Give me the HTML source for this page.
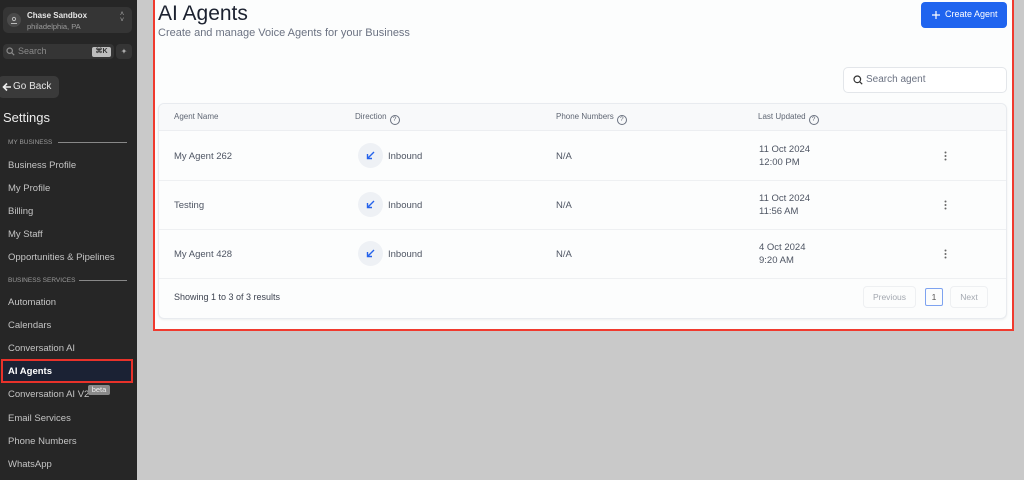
<!DOCTYPE html>
<html><head><meta charset="utf-8"><style>
*{box-sizing:border-box;margin:0;padding:0}
body{width:1024px;height:480px;overflow:hidden;background:#c9c9c9;font-family:"Liberation Sans",sans-serif;position:relative}
.sb{position:absolute;left:0;top:0;width:137px;height:480px;background:#262626;color:#c8c8c8}
.abs{position:absolute}
.it{position:absolute;left:8px;font-size:9.5px;color:#c4c4c4}
.sec{position:absolute;left:8px;font-size:6.5px;color:#9a9a9a}
.main{position:absolute;left:153px;top:-4px;width:861px;height:335px;border:2px solid #f03a2e;background:#fcfdfd}
.card{position:absolute;left:158px;top:103px;width:849px;height:216px;border:1px solid #e8ebef;border-radius:6px;background:#fcfdfd;box-shadow:0 1px 2px rgba(0,0,0,.06)}
.hd{position:absolute;font-size:8px;color:#5f6673}
.cell{position:absolute;font-size:9.5px;color:#4e5563}
.q{display:inline-block;width:10px;height:10px;border:1px solid #6b7280;border-radius:50%;font-size:6.5px;text-align:center;line-height:8px;vertical-align:-2px;margin-left:3px}
.ic{position:absolute;width:25px;height:25px;border-radius:50%;background:#eef1f5}
.ic svg{position:absolute;left:8px;top:8px}
.dots{position:absolute}
</style></head><body>
<div class="sb">
 <div class="abs" style="left:3px;top:7px;width:129px;height:26px;background:#353535;border-radius:5px"></div>
 <div class="abs" style="left:7px;top:13px;width:14px;height:14px;border-radius:50%;background:#4a4a4a"></div>
 <svg class="abs" style="left:10px;top:16px" width="8" height="8" viewBox="0 0 8 8" fill="none" stroke="#bbb" stroke-width="1"><circle cx="4" cy="3" r="1.6"/><path d="M1 7.5h6"/></svg>
 <div class="abs" style="left:27px;top:11px;font-size:8px;color:#e6e6e6;font-weight:bold">Chase Sandbox</div>
 <div class="abs" style="left:27px;top:22px;font-size:7.5px;color:#9c9c9c">philadelphia, PA</div>
 <div class="abs" style="left:120px;top:12px;font-size:7px;color:#aaa;line-height:6px">˄<br>˅</div>
 <div class="abs" style="left:3px;top:44px;width:111px;height:15px;background:#353535;border-radius:4px"></div>
 <svg class="abs" style="left:6px;top:47px" width="9" height="9" viewBox="0 0 9 9" fill="none" stroke="#8a8a8a" stroke-width="1.2"><circle cx="3.7" cy="3.7" r="2.7"/><path d="M5.7 5.7l2.5 2.5"/></svg>
 <div class="abs" style="left:18px;top:46px;font-size:9px;color:#8a8a8a">Search</div>
 <div class="abs" style="left:92px;top:47px;width:19px;height:10px;background:#bdbdbd;border-radius:2px;font-size:7px;color:#333;text-align:center;line-height:10px;font-weight:bold">⌘K</div>
 <div class="abs" style="left:116px;top:44px;width:16px;height:15px;background:#353535;border-radius:4px;font-size:8px;color:#aaa;text-align:center;line-height:15px">✦</div>
 <div class="abs" style="left:-2px;top:76px;width:61px;height:22px;background:#3a3a3a;border-radius:5px"></div>
 <svg class="abs" style="left:2px;top:82px" width="10" height="10" viewBox="0 0 10 10" fill="none" stroke="#eee" stroke-width="1.6"><path d="M9 5H1.5M5 1.5L1.5 5 5 8.5"/></svg>
 <div class="abs" style="left:13px;top:81px;font-size:10px;color:#e6e6e6">Go Back</div>
 <div class="abs" style="left:3px;top:110px;font-size:13px;color:#ececec">Settings</div>
 <div class="sec" style="top:139px">MY BUSINESS</div>
 <div class="abs" style="left:58px;top:142px;width:69px;height:1px;background:#888"></div>
 <div class="it" style="top:160px">Business Profile</div>
 <div class="it" style="top:183px">My Profile</div>
 <div class="it" style="top:206px">Billing</div>
 <div class="it" style="top:229px">My Staff</div>
 <div class="it" style="top:252px">Opportunities &amp; Pipelines</div>
 <div class="sec" style="top:277px">BUSINESS SERVICES</div>
 <div class="abs" style="left:79px;top:280px;width:48px;height:1px;background:#888"></div>
 <div class="it" style="top:297px">Automation</div>
 <div class="it" style="top:320px">Calendars</div>
 <div class="it" style="top:343px">Conversation AI</div>
 <div class="abs" style="left:1px;top:359px;width:132px;height:24px;background:#1b2234;border:2px solid #e8322a"></div>
 <div class="it" style="top:366px;color:#fff;font-weight:bold">AI Agents</div>
 <div class="it" style="top:389px">Conversation AI V2</div>
 <div class="abs" style="left:88px;top:385px;width:22px;height:10px;background:#8a8a8a;border-radius:2px;font-size:7.5px;color:#eee;text-align:center;line-height:10px">beta</div>
 <div class="it" style="top:413px">Email Services</div>
 <div class="it" style="top:436px">Phone Numbers</div>
 <div class="it" style="top:459px">WhatsApp</div>
</div>
<div class="main"></div>
<div class="abs" style="left:158px;top:2px;font-size:21px;color:#1c2230">AI Agents</div>
<div class="abs" style="left:158px;top:27px;font-size:11px;color:#6b7282">Create and manage Voice Agents for your Business</div>
<div class="abs" style="left:921px;top:2px;width:86px;height:26px;background:#1f64ef;border-radius:4px"></div>
<svg class="abs" style="left:932px;top:11px" width="8" height="8" viewBox="0 0 8 8" stroke="#fff" stroke-width="1.2"><path d="M4 0v8M0 4h8"/></svg>
<div class="abs" style="left:945px;top:9px;font-size:9px;color:#fff">Create Agent</div>
<div class="abs" style="left:843px;top:67px;width:164px;height:26px;border:1px solid #e3e6ea;border-radius:5px;background:#fff"></div>
<svg class="abs" style="left:853px;top:75px" width="10" height="10" viewBox="0 0 10 10" fill="none" stroke="#333" stroke-width="1.2"><circle cx="4.3" cy="4.3" r="3.3"/><path d="M6.8 6.8L9.2 9.2"/></svg>
<div class="abs" style="left:866px;top:74px;font-size:10px;color:#6b7282">Search agent</div>
<div class="card">
 <div class="abs" style="left:0;top:0;width:847px;height:27px;background:#f8f9fa;border-bottom:1px solid #eceef1;border-radius:6px 6px 0 0"></div>
 <div class="abs" style="left:0;top:76px;width:847px;height:1px;background:#eef0f2"></div>
 <div class="abs" style="left:0;top:125px;width:847px;height:1px;background:#eef0f2"></div>
 <div class="abs" style="left:0;top:174px;width:847px;height:1px;background:#eef0f2"></div>
</div>
<div class="hd" style="left:174px;top:112px">Agent Name</div>
<div class="hd" style="left:355px;top:112px">Direction<span class="q">?</span></div>
<div class="hd" style="left:556px;top:112px">Phone Numbers<span class="q">?</span></div>
<div class="hd" style="left:758px;top:112px">Last Updated<span class="q">?</span></div>

<div class="cell" style="left:174px;top:151px">My Agent 262</div>
<div class="ic" style="left:358px;top:143px"><svg width="9" height="9" viewBox="0 0 9 9" fill="none" stroke="#2563eb" stroke-width="1.4"><path d="M8 1L1.5 7.5M1.5 3v4.5H6"/></svg></div>
<div class="cell" style="left:388px;top:151px">Inbound</div>
<div class="cell" style="left:556px;top:151px">N/A</div>
<div class="cell" style="left:759px;top:143px;line-height:13px">11 Oct 2024<br>12:00 PM</div>
<svg class="dots" style="left:944px;top:151px" width="3" height="10"><circle cx="1.5" cy="1.5" r="1" fill="#666"/><circle cx="1.5" cy="5" r="1" fill="#666"/><circle cx="1.5" cy="8.5" r="1" fill="#666"/></svg>

<div class="cell" style="left:174px;top:200px">Testing</div>
<div class="ic" style="left:358px;top:192px"><svg width="9" height="9" viewBox="0 0 9 9" fill="none" stroke="#2563eb" stroke-width="1.4"><path d="M8 1L1.5 7.5M1.5 3v4.5H6"/></svg></div>
<div class="cell" style="left:388px;top:200px">Inbound</div>
<div class="cell" style="left:556px;top:200px">N/A</div>
<div class="cell" style="left:759px;top:192px;line-height:13px">11 Oct 2024<br>11:56 AM</div>
<svg class="dots" style="left:944px;top:200px" width="3" height="10"><circle cx="1.5" cy="1.5" r="1" fill="#666"/><circle cx="1.5" cy="5" r="1" fill="#666"/><circle cx="1.5" cy="8.5" r="1" fill="#666"/></svg>

<div class="cell" style="left:174px;top:249px">My Agent 428</div>
<div class="ic" style="left:358px;top:241px"><svg width="9" height="9" viewBox="0 0 9 9" fill="none" stroke="#2563eb" stroke-width="1.4"><path d="M8 1L1.5 7.5M1.5 3v4.5H6"/></svg></div>
<div class="cell" style="left:388px;top:249px">Inbound</div>
<div class="cell" style="left:556px;top:249px">N/A</div>
<div class="cell" style="left:759px;top:241px;line-height:13px">4 Oct 2024<br>9:20 AM</div>
<svg class="dots" style="left:944px;top:249px" width="3" height="10"><circle cx="1.5" cy="1.5" r="1" fill="#666"/><circle cx="1.5" cy="5" r="1" fill="#666"/><circle cx="1.5" cy="8.5" r="1" fill="#666"/></svg>

<div class="cell" style="left:174px;top:292px;font-size:9px;color:#3d4350">Showing 1 to 3 of 3 results</div>
<div class="abs" style="left:863px;top:286px;width:53px;height:22px;border:1px solid #eef0f2;border-radius:4px;font-size:8.5px;color:#a3a8b0;text-align:center;line-height:20px">Previous</div>
<div class="abs" style="left:925px;top:288px;width:18px;height:18px;border:1px solid #7ea3f0;border-radius:2px;font-size:8.5px;color:#555;text-align:center;line-height:16px">1</div>
<div class="abs" style="left:950px;top:286px;width:38px;height:22px;border:1px solid #eef0f2;border-radius:4px;font-size:8.5px;color:#a3a8b0;text-align:center;line-height:20px">Next</div>
</body></html>
